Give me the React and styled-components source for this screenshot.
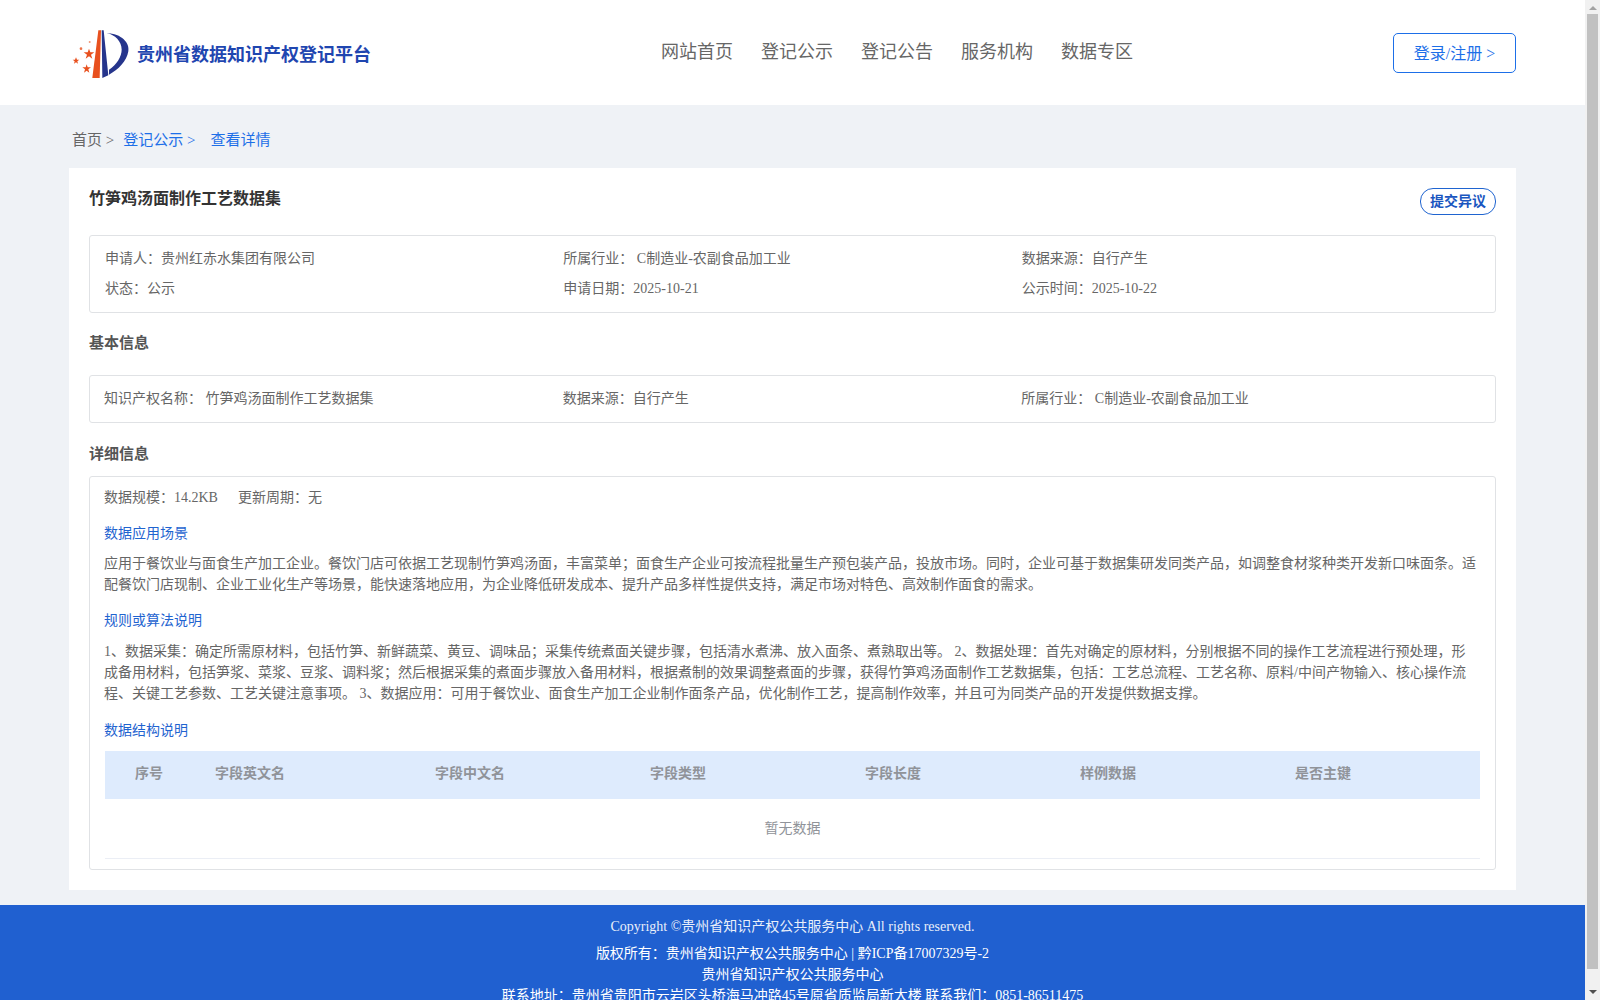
import React from 'react';
import styled, { createGlobalStyle } from 'styled-components';

const GlobalStyle = createGlobalStyle`
  body {
    width: 1585px;
    margin: 0;
    background: #eff2f6;
    color: #666;
    font-family: "Liberation Serif", "Noto Sans CJK SC", serif;
    font-size: 14px;
  }
`;

const ScrollTrack = styled.div`
  position: fixed;
  top: 0;
  right: 0;
  bottom: 0;
  display: flex;
  flex-direction: column;
  align-items: center;
  width: 15px;
  background: #f1f1f1;
`;

const ScrollThumb = styled.div`
  flex: 1;
  width: 11px;
  margin: 4px 0 21px;
  background: #c1c1c1;
`;

const ScrollArrow = styled.div`
  flex: none;
  width: 0;
  height: 0;
  border-left: 4px solid transparent;
  border-right: 4px solid transparent;
  border-${(p) => (p.$down ? 'top' : 'bottom')}: 4px solid ${(p) => (p.$down ? '#505050' : '#a3a3a3')};
  margin: ${(p) => (p.$down ? '0 0 6px' : '6px 0 0')};
`;

const Header = styled.header`
  display: grid;
  grid-template-columns: 592px 1fr auto;
  align-items: center;
  height: 105px;
  padding: 0 69px;
  background: #fff;
`;

const Brand = styled.a`
  display: flex;
  align-items: center;
  color: #1f46b0;
  font-size: 18px;
  font-weight: bold;
`;

const Nav = styled.nav`
  display: flex;
  gap: 28px;
  margin-top: -6px;
`;

const NavItem = styled.a`
  color: #666;
  font-size: 18px;
`;

const LoginButton = styled.button`
  width: 123px;
  height: 40px;
  padding: 0 0 2px;
  border: 1px solid #1d6fe8;
  border-radius: 5px;
  background: #fff;
  color: #1d6fe8;
  font: inherit;
  font-size: 16px;
`;

const Breadcrumb = styled.div`
  display: flex;
  align-items: center;
  height: 59px;
  padding: 4px 0 0 72px;
  font-size: 15px;
`;

const Crumb = styled.a`
  margin-right: ${(p) => p.$gap || 9}px;
  color: ${(p) => (p.$active ? '#1d6fe8' : '#666')};
`;

const Card = styled.main`
  margin: 0 69px;
  padding: 20px;
  background: #fff;
`;

const TitleRow = styled.div`
  display: flex;
  align-items: center;
  justify-content: space-between;
`;

const Title = styled.h1`
  margin: -9px 0 0;
  color: #333;
  font-size: 16px;
  font-weight: bold;
`;

const ObjectionButton = styled.button`
  width: 76px;
  height: 27px;
  padding: 0 0 4px;
  border: 1px solid #1f64d0;
  border-radius: 13px;
  background: #fff;
  color: #1a56c0;
  font: inherit;
  font-size: 14px;
  font-weight: bold;
`;

const Panel = styled.section`
  margin-top: ${(p) => p.$top || 0}px;
  border: 1px solid #e0e2e5;
  border-radius: 3px;
`;

const InfoGrid = styled.div`
  display: grid;
  grid-template-columns: repeat(3, 1fr);
  row-gap: ${(p) => p.$rowGap || 0}px;
  padding: ${(p) => p.$padding};
  line-height: ${(p) => p.$line}px;
`;

const SectionTitle = styled.h2`
  margin: ${(p) => p.$top}px 0 0;
  color: #555;
  font-size: 15px;
  font-weight: bold;
  line-height: 20px;
`;

const Detail = styled.div`
  padding: 11px 15px 10px;
`;

const Meta = styled.div`
  display: flex;
  gap: 20px;
  margin-left: -1px;
  line-height: 20px;
`;

const SubTitle = styled.h3`
  margin: ${(p) => p.$top}px 0 0 -1px;
  color: #1f64d0;
  font-size: 14px;
  font-weight: normal;
  line-height: 20px;
`;

const Paragraph = styled.p`
  margin: ${(p) => p.$top || 10}px 1px 0 -1px;
  line-height: 21px;
`;

const TableHead = styled.div`
  display: grid;
  grid-template-columns: 80px 220px repeat(5, 1fr);
  align-items: center;
  height: 48px;
  margin-top: 10px;
  padding-bottom: 6px;
  box-sizing: border-box;
  background: #deebfd;
  color: #909399;
  font-weight: bold;
`;

const HeadCell = styled.div`
  padding-left: 30px;
`;

const EmptyRow = styled.div`
  display: flex;
  align-items: center;
  justify-content: center;
  height: 60px;
  padding-bottom: 3px;
  box-sizing: border-box;
  border-bottom: 1px solid #ebeef5;
  color: #909399;
`;

const Footer = styled.footer`
  margin-top: 15px;
  padding: 11px 0 20px;
  background: #2060d0;
  color: #fff;
  text-align: center;
`;

const Copyright = styled.div`
  margin-bottom: 6px;
  line-height: 21px;
  opacity: 0.9;
`;

const FooterLine = styled.div`
  line-height: 21px;
`;

const LogoMark = styled.svg`
  flex: none;
  margin: 0 5px 0 -3px;
`;

const Logo = () => (
  <LogoMark width="66" height="60" viewBox="0 0 198 180">
    <polygon points="97,22 105,22 101,165 79,165" fill="#e8501e" />
    <path
      d="M107 22 L113 22 L127 157 L109 165 Z M122 30 C167 32 192 60 187 85 C182 115 157 140 129 155 L129 140 C152 125 167 100 167 80 C167 55 147 35 122 30 Z"
      fill="#26358c"
    />
    <g fill="#e8501e">
      <polygon points="69,77 73,88 85,88 75,95 79,107 69,100 59,107 63,95 53,88 65,88" />
      <polygon points="30,103 33,110 40,110 34,115 36,122 30,118 24,122 26,115 20,110 27,110" />
      <polygon points="62,124 65,133 75,133 67,139 70,149 62,143 54,149 57,139 49,133 59,133" />
      <circle cx="45" cy="77" r="4" opacity="0.8" />
      <circle cx="71" cy="57" r="3" opacity="0.6" />
    </g>
  </LogoMark>
);

const columns = ['序号', '字段英文名', '字段中文名', '字段类型', '字段长度', '样例数据', '是否主键'];

const App = () => (
  <>
    <GlobalStyle />
    <Header>
      <Brand>
        <Logo />
        贵州省数据知识产权登记平台
      </Brand>
      <Nav>
        <NavItem>网站首页</NavItem>
        <NavItem>登记公示</NavItem>
        <NavItem>登记公告</NavItem>
        <NavItem>服务机构</NavItem>
        <NavItem>数据专区</NavItem>
      </Nav>
      <LoginButton>登录/注册 &gt;</LoginButton>
    </Header>

    <Breadcrumb>
      <Crumb>首页 &gt;</Crumb>
      <Crumb $active $gap={15}>登记公示 &gt;</Crumb>
      <Crumb $active>查看详情</Crumb>
    </Breadcrumb>

    <Card>
      <TitleRow>
        <Title>竹笋鸡汤面制作工艺数据集</Title>
        <ObjectionButton>提交异议</ObjectionButton>
      </TitleRow>

      <Panel $top={20}>
        <InfoGrid $padding="8px 15px 9px" $line={29} $rowGap={1}>
          <div>申请人：贵州红赤水集团有限公司</div>
          <div>所属行业： C制造业-农副食品加工业</div>
          <div>数据来源：自行产生</div>
          <div>状态：公示</div>
          <div>申请日期：2025-10-21</div>
          <div>公示时间：2025-10-22</div>
        </InfoGrid>
      </Panel>

      <SectionTitle $top={20}>基本信息</SectionTitle>
      <Panel $top={22}>
        <InfoGrid $padding="0 15px 0 14px" $line={46}>
          <div>知识产权名称： 竹笋鸡汤面制作工艺数据集</div>
          <div>数据来源：自行产生</div>
          <div>所属行业： C制造业-农副食品加工业</div>
        </InfoGrid>
      </Panel>

      <SectionTitle $top={21}>详细信息</SectionTitle>
      <Panel $top={12}>
        <Detail>
          <Meta>
            <span>数据规模：14.2KB</span>
            <span>更新周期：无</span>
          </Meta>

          <SubTitle $top={16}>数据应用场景</SubTitle>
          <Paragraph $top={9}>
            应用于餐饮业与面食生产加工企业。餐饮门店可依据工艺现制竹笋鸡汤面，丰富菜单；面食生产企业可按流程批量生产预包装产品，投放市场。同时，企业可基于数据集研发同类产品，如调整食材浆种类开发新口味面条。适配餐饮门店现制、企业工业化生产等场景，能快速落地应用，为企业降低研发成本、提升产品多样性提供支持，满足市场对特色、高效制作面食的需求。
          </Paragraph>

          <SubTitle $top={16}>规则或算法说明</SubTitle>
          <Paragraph>
            1、数据采集：确定所需原材料，包括竹笋、新鲜蔬菜、黄豆、调味品；采集传统煮面关键步骤，包括清水煮沸、放入面条、煮熟取出等。 2、数据处理：首先对确定的原材料，分别根据不同的操作工艺流程进行预处理，形成备用材料，包括笋浆、菜浆、豆浆、调料浆；然后根据采集的煮面步骤放入备用材料，根据煮制的效果调整煮面的步骤，获得竹笋鸡汤面制作工艺数据集，包括：工艺总流程、工艺名称、原料/中间产物输入、核心操作流程、关键工艺参数、工艺关键注意事项。 3、数据应用：可用于餐饮业、面食生产加工企业制作面条产品，优化制作工艺，提高制作效率，并且可为同类产品的开发提供数据支撑。
          </Paragraph>

          <SubTitle $top={17}>数据结构说明</SubTitle>
          <TableHead>
            {columns.map((c) => (
              <HeadCell key={c}>{c}</HeadCell>
            ))}
          </TableHead>
          <EmptyRow>暂无数据</EmptyRow>
        </Detail>
      </Panel>
    </Card>

    <Footer>
      <Copyright>Copyright ©贵州省知识产权公共服务中心 All rights reserved.</Copyright>
      <FooterLine>版权所有：贵州省知识产权公共服务中心 | 黔ICP备17007329号-2</FooterLine>
      <FooterLine>贵州省知识产权公共服务中心</FooterLine>
      <FooterLine>联系地址：贵州省贵阳市云岩区头桥海马冲路45号原省质监局新大楼 联系我们：0851-86511475</FooterLine>
    </Footer>

    <ScrollTrack>
      <ScrollArrow />
      <ScrollThumb />
      <ScrollArrow $down />
    </ScrollTrack>
  </>
);

export default App;
